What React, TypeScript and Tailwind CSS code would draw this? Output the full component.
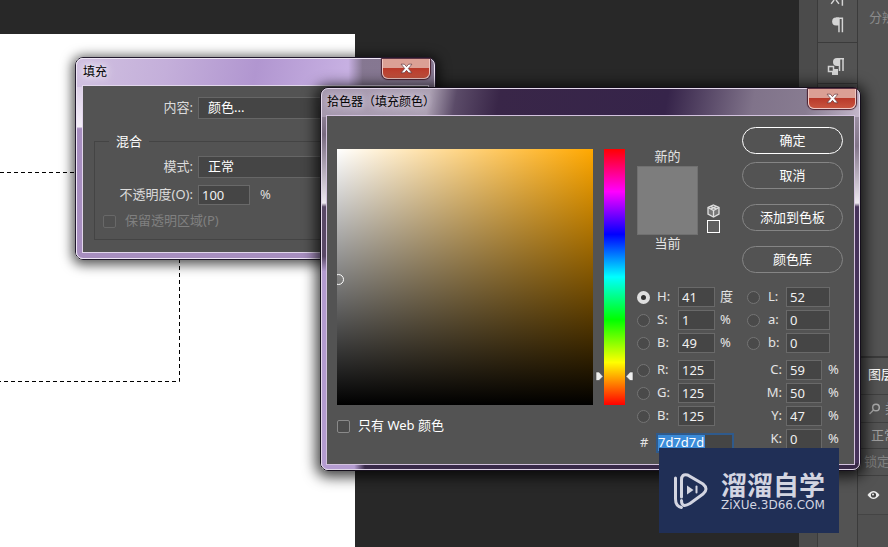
import React from 'react';

const sans = "font-['Noto_Sans','Noto_Sans_CJK_SC',sans-serif]";

const CloseButton = () => (
  <button
    type="button"
    aria-label="关闭"
    className="flex h-5 w-12 items-center justify-center rounded-b-md border border-t-0 border-[#f0c8c4] bg-linear-to-b from-[#dba095] from-45% via-[#b93a2b] via-50% to-[#c8533f] shadow-[0_0_1px_1px_#4a2030]"
  >
    <svg className="shrink-0" width="13" height="11" viewBox="0 0 12 10">
      <path d="M1 1h3l2 2.300L8 1h3L7.700 5 11 9H8L6 6.700 4 9H1l3.300-4z" fill="#fff" stroke="#5a3038" strokeWidth="0.6" />
    </svg>
  </button>
);

interface FieldProps {
  id: string;
  label: string;
  value: string;
  unit?: string;
  checked?: boolean;
  wide?: boolean;
}

const inputClass = 'h-5 border border-[#696969] bg-[#454545] px-[3px] text-[#f0f0f0] outline-none';

const Radio = ({ id, checked }: { id: string; checked?: boolean }) => (
  <input
    id={id}
    type="radio"
    name="channel"
    defaultChecked={checked}
    className="size-[13px] shrink-0 appearance-none rounded-full border border-[#747474] bg-[#4a4a4a] checked:border-4 checked:border-[#dedede] checked:bg-[#303030]"
  />
);

const RadioField = ({ id, label, value, unit, checked, wide }: FieldProps) => (
  <div className="flex h-5 items-center">
    <Radio id={id} checked={checked} />
    <label htmlFor={id} className={wide ? 'ml-2 w-[18px]' : 'ml-[7px] w-[21px]'}>
      {label}:
    </label>
    <input aria-label={label} defaultValue={value} className={`${inputClass} ${wide ? 'w-11' : 'w-[37px]'}`} />
    {unit && <span className="ml-[5px]">{unit}</span>}
  </div>
);

const InkField = ({ id, label, value }: FieldProps) => (
  <div className="flex h-5 items-center">
    <label htmlFor={id} className="mr-1 w-[35px] text-right">
      {label}:
    </label>
    <input id={id} defaultValue={value} className={`${inputClass} w-9`} />
    <span className="ml-[6px]">%</span>
  </div>
);

const PillButton = ({ children, primary }: { children: React.ReactNode; primary?: boolean }) => (
  <button
    type="button"
    className={`h-[27px] w-full rounded-full border text-white ${primary ? 'border-white' : 'border-[#858585]'}`}
  >
    {children}
  </button>
);

const FillDialog = () => (
  <section className="absolute top-[57px] left-[75px] w-[361px] rounded-lg border border-[#20182c] shadow-[0_2px_12px_3px_rgba(0,0,0,0.65)]">
    <div className="rounded-[7px] border border-[#efe6f6] px-[5px] pb-[5px] [background:linear-gradient(90deg,transparent_76%,#75697dcc_80%)_top/100%_28px_no-repeat,linear-gradient(100deg,#d0c0e0_0%,#c4afda_25%,#b196d0_50%,#c7b0e2_75%)_top/100%_28px_no-repeat,linear-gradient(#cbb9dc_0%,#f4eef8_34%,#a78ebf_35%)]">
      <header className="-mr-px flex h-[26px] items-start justify-between pl-px text-xs text-black">
        <h2 className="pt-[5px] [text-shadow:0_0_6px_#fff,0_0_12px_#fff]">填充</h2>
        <CloseButton />
      </header>
      <div className="border border-[#e2d6ec] bg-[#535353] px-[11px] pt-[11px] pb-[12px] text-[#dcdcdc]">
        <div className="flex h-[22px] items-center">
          <label htmlFor="content" className="mr-[5px] w-[99px] text-right">内容:</label>
          <select id="content" className="h-[22px] w-[210px] appearance-none border border-[#666] bg-[#454545] pl-[9px] text-white">
            <option>颜色...</option>
          </select>
        </div>
        <fieldset className="mt-[12px] h-[109px] border border-[#444] pl-[8px]">
          <legend className="ml-[6px] px-[7px] leading-5 text-white">混合</legend>
          <div className="mt-[5px] flex h-[22px] items-center">
            <label htmlFor="mode" className="mr-[5px] w-[90px] text-right">模式:</label>
            <select id="mode" className="h-[22px] w-[200px] appearance-none border border-[#666] bg-[#454545] pl-[9px] text-white">
              <option>正常</option>
            </select>
          </div>
          <div className="mt-[6px] flex h-[22px] items-center">
            <label htmlFor="opacity" className="mr-[5px] w-[90px] text-right whitespace-nowrap">不透明度(O):</label>
            <input id="opacity" defaultValue="100" className={`${inputClass} w-[52px]`} />
            <span className="ml-[10px]">%</span>
          </div>
          <label className="mt-1 flex h-[22px] items-center gap-[9px] text-[#808080]">
            <input type="checkbox" disabled className="size-[13px] appearance-none rounded-xs border border-[#686868] bg-[#505050]" />
            保留透明区域(P)
          </label>
        </fieldset>
      </div>
    </div>
  </section>
);

const ColorField = () => (
  <div className="relative h-64 w-64 overflow-hidden bg-[linear-gradient(to_top,#000,transparent),linear-gradient(to_right,#fff,#ffa800)]">
    <span className="absolute top-[125px] -left-[4px] size-[11px] rounded-full border border-white" />
  </div>
);

const HueSlider = () => (
  <div className="relative mx-[11px] h-64 w-[21px] bg-[linear-gradient(#f00,#f0f,#00f,#0ff,#0f0,#ff0,#f00)]">
    <svg className="absolute top-[222px] -left-[9px]" width="40" height="11" viewBox="0 0 40 11">
      <path d="M1 1h3l4 4.500-4 4H1z" fill="#eee" stroke="#444" strokeWidth="0.6" />
      <path d="M38 1h-3l-4 4.500 4 4h3z" fill="#eee" stroke="#444" strokeWidth="0.6" />
    </svg>
  </div>
);

const CubeIcon = () => (
  <svg width="13" height="14" viewBox="0 0 13 14" fill="none" stroke="#e0e0e0" strokeWidth="1.300">
    <path d="M6.500 1 12 3.500v6.500l-5.500 3L1 10V3.500z" fill="#777" />
    <path d="M1 3.500 6.500 6.500 12 3.500M6.500 6.500V13M3.500 2.300 9.300 5M9.500 2.300 3.800 5" />
  </svg>
);

const ColorPickerDialog = () => (
  <section className="absolute top-[87px] left-[320px] w-[541px] rounded-lg border border-[#150f1c] shadow-[0_2px_14px_4px_rgba(0,0,0,0.75)]">
    <div className="rounded-[7px] border border-[#e3d8ea] px-[4px] pb-[4px] [background:linear-gradient(100deg,#a497ad_0%,#aca1b3_20%,#5b4b68_25%,#392648_33%,#36244a_64%,#80738a_80%,#887c91_90%,#c3b7ca_100%)_top/100%_28px_no-repeat,linear-gradient(90deg,#b49cd0_0%,#b49cd0_6%,#392a49_8%)_bottom/100%_6px_no-repeat,linear-gradient(#a99db0_0%,#77697f_12%,#eee9f0_30%,#594866_31%,#594866_44%,#b39bcf_48%)_left/6px_100%_no-repeat,linear-gradient(#b4aabb_0%,#817488_15%,#eee9f0_30%,#46335a_31%)]">
      <header className="-mr-px flex h-[26px] items-start justify-between pl-px text-xs text-black">
        <h2 className="pt-[5px] [text-shadow:0_0_6px_#e8e0ee,0_0_12px_#d8cce0]">拾色器（填充颜色）</h2>
        <CloseButton />
      </header>
      <div className="flex h-[350px] items-start border border-[#d3c2de] bg-[#535353] pt-[33px] pr-[11px] pl-[10px] text-[#e4e4e4]">
        <div>
          <ColorField />
          <label className="mt-[10px] flex h-[22px] items-center gap-2 text-white">
            <input type="checkbox" className="size-[13px] appearance-none rounded-xs border border-[#8a8a8a] bg-[#4c4c4c]" />
            只有 Web 颜色
          </label>
        </div>
        <HueSlider />
        <div className="-mt-[22px] flex-1 pl-px">
          <div className="flex items-start">
            <div className="flex w-[61px] flex-col items-center pt-[19px]">
              <span className="leading-5">新的</span>
              <div className="h-[69px] w-full border border-[#707070] bg-[#7d7d7d]" />
              <span className="leading-4">当前</span>
            </div>
            <div className="mt-[77px] ml-[9px] flex flex-col items-center gap-[2px]">
              <CubeIcon />
              <span className="size-[13px] border border-white bg-[#606060]" />
            </div>
            <div className="ml-auto w-[101px]">
              <PillButton primary>确定</PillButton>
              <div className="mt-2"><PillButton>取消</PillButton></div>
              <div className="mt-[15px]"><PillButton>添加到色板</PillButton></div>
              <div className="mt-[15px]"><PillButton>颜色库</PillButton></div>
            </div>
          </div>
          <div className="mt-[14px] flex">
            <div className="flex w-[110px] flex-col gap-[3px]">
              <RadioField id="hue" label="H" value="41" unit="度" checked />
              <RadioField id="sat" label="S" value="1" unit="%" />
              <RadioField id="bri" label="B" value="49" unit="%" />
              <div className="mt-1 flex flex-col gap-[3px]">
                <RadioField id="red" label="R" value="125" />
                <RadioField id="green" label="G" value="125" />
                <RadioField id="blue" label="B" value="125" />
              </div>
              <div className="mt-1 flex h-5 items-center">
                <label htmlFor="hex" className="ml-[3px] w-4">#</label>
                <div className="flex h-5 w-[78px] shrink-0 items-center border-2 border-[#2f5a8c] bg-[#454545]">
                  <input id="hex" defaultValue="7d7d7d" className="h-4 w-[47px] bg-[#3b8bd8] text-white outline-none" />
                </div>
              </div>
            </div>
            <div className="flex flex-col gap-[3px]">
              <RadioField id="lab-l" label="L" value="52" wide />
              <RadioField id="lab-a" label="a" value="0" wide />
              <RadioField id="lab-b" label="b" value="0" wide />
              <div className="mt-1 flex flex-col gap-[3px]">
                <InkField id="cyan" label="C" value="59" />
                <InkField id="magenta" label="M" value="50" />
                <InkField id="yellow" label="Y" value="47" />
                <InkField id="black" label="K" value="0" />
              </div>
            </div>
          </div>
        </div>
      </div>
    </div>
  </section>
);

const IconStrip = () => (
  <aside className="w-[41px] shrink-0 border-x border-[#3b3b3b] bg-[#535353]">
    <div className="flex h-[43px] flex-col items-center border-b border-[#3b3b3b]">
      <svg width="16" height="43" viewBox="0 0 16 43" fill="none" stroke="#d4d4d4" strokeWidth="1.500">
        <path d="M1 4 4 0M6 0l3 4M12.500 0v6" />
        <path d="M6 18.700h7M9 18v15M12.500 18v15" />
        <path d="M9 18H6a4 4 0 0 0 0 8h3z" fill="#d4d4d4" stroke="none" />
      </svg>
    </div>
    <div className="flex h-[41px] items-center justify-center border-b border-[#3b3b3b] pt-[6px] pr-[4px]">
      <svg width="18" height="20" viewBox="0 0 18 20" fill="none" stroke="#d4d4d4" strokeWidth="1.500">
        <path d="M10 2.700h7M12.500 2v13M16 2v13" />
        <path d="M12 2h-2a4 4 0 0 0 0 8h2z" fill="#d4d4d4" stroke="none" />
        <path d="M5 13h6v6H5z" fill="#d4d4d4" stroke="none" />
        <path d="M1.500 10.500h5v5h-5z" fill="#535353" />
      </svg>
    </div>
  </aside>
);

const LayersPanel = () => (
  <aside className="flex w-[30px] shrink-0 flex-col overflow-hidden bg-[#535353] whitespace-nowrap text-[#a0a0a0]">
    <div className="h-[358px] border-b-2 border-[#3b3b3b] pt-2 pl-[11px] text-[#8b8b8b]">分辨率</div>
    <h2 className="h-9 pt-[7px] pl-[10px] text-white">图层</h2>
    <div className="flex h-[29px] items-center gap-1 border-y border-[#404040] pl-[11px]">
      <svg className="shrink-0" width="12" height="12" viewBox="0 0 12 12" fill="none" stroke="#aaa" strokeWidth="1.500">
        <circle cx="7" cy="4.500" r="3.300" />
        <path d="m4.500 7-4 4" />
      </svg>
      类型
    </div>
    <div className="flex h-[26px] items-center border-b border-[#404040] pl-[13px]">正常</div>
    <div className="flex h-[27px] items-center border-b border-[#404040] pl-[6px] text-[#808080]">锁定:</div>
    <div className="flex h-[39px] items-center border-b border-[#444] pl-[9px]">
      <svg className="shrink-0" width="13" height="10" viewBox="0 0 13 10">
        <path d="M0.500 5Q6.500-3 12.500 5 6.500 13 0.500 5z" fill="#ececec" />
        <circle cx="6.500" cy="5" r="2.600" fill="#444" />
        <circle cx="6" cy="4.500" r="1" fill="#ececec" />
      </svg>
    </div>
    <div className="flex-1 bg-[#505050]" />
  </aside>
);

const Watermark = () => (
  <div className="absolute top-[448px] left-[659px] flex h-[85px] w-[180px] items-center gap-[12px] bg-[#202f56] pl-[14px] text-[#d3d5e1]">
    <svg className="shrink-0" width="36" height="38" viewBox="0 0 36 38" fill="none" stroke="currentColor" strokeWidth="3" strokeLinecap="round">
      <path d="M2.500 6v21q0 7 6 8.500" />
      <path d="M8.500 25V8q0-6.500 6-5L30 12q6 5 0 10L17 31.500q-8.500 5-8.500-3" />
      <path d="M14 13.500v9l6.500-4.500z" fill="currentColor" stroke="none" />
      <path d="M23.500 14.500v6" strokeWidth="2" />
    </svg>
    <div className="whitespace-nowrap">
      <p className="text-[26px] leading-7 font-bold">溜溜自学</p>
      <p className="font-['DejaVu_Sans',sans-serif] text-xs leading-3">ZiXUe.3D66.COM</p>
    </div>
  </div>
);

export default function App() {
  return (
    <main className={`relative flex min-h-screen overflow-hidden bg-[#282828] text-[13px] ${sans}`}>
      <div className="flex flex-1 pt-[34px]">
        <div className="w-4/9 bg-white">
          <svg className="block" width="181" height="349" fill="none" stroke="#000" strokeDasharray="4 3">
            <path d="M0 138.500h179.500v209H0" />
          </svg>
        </div>
      </div>
      <div className="w-[18px] shrink-0 bg-[#4b4b4b]" />
      <IconStrip />
      <LayersPanel />
      <FillDialog />
      <ColorPickerDialog />
      <Watermark />
    </main>
  );
}
